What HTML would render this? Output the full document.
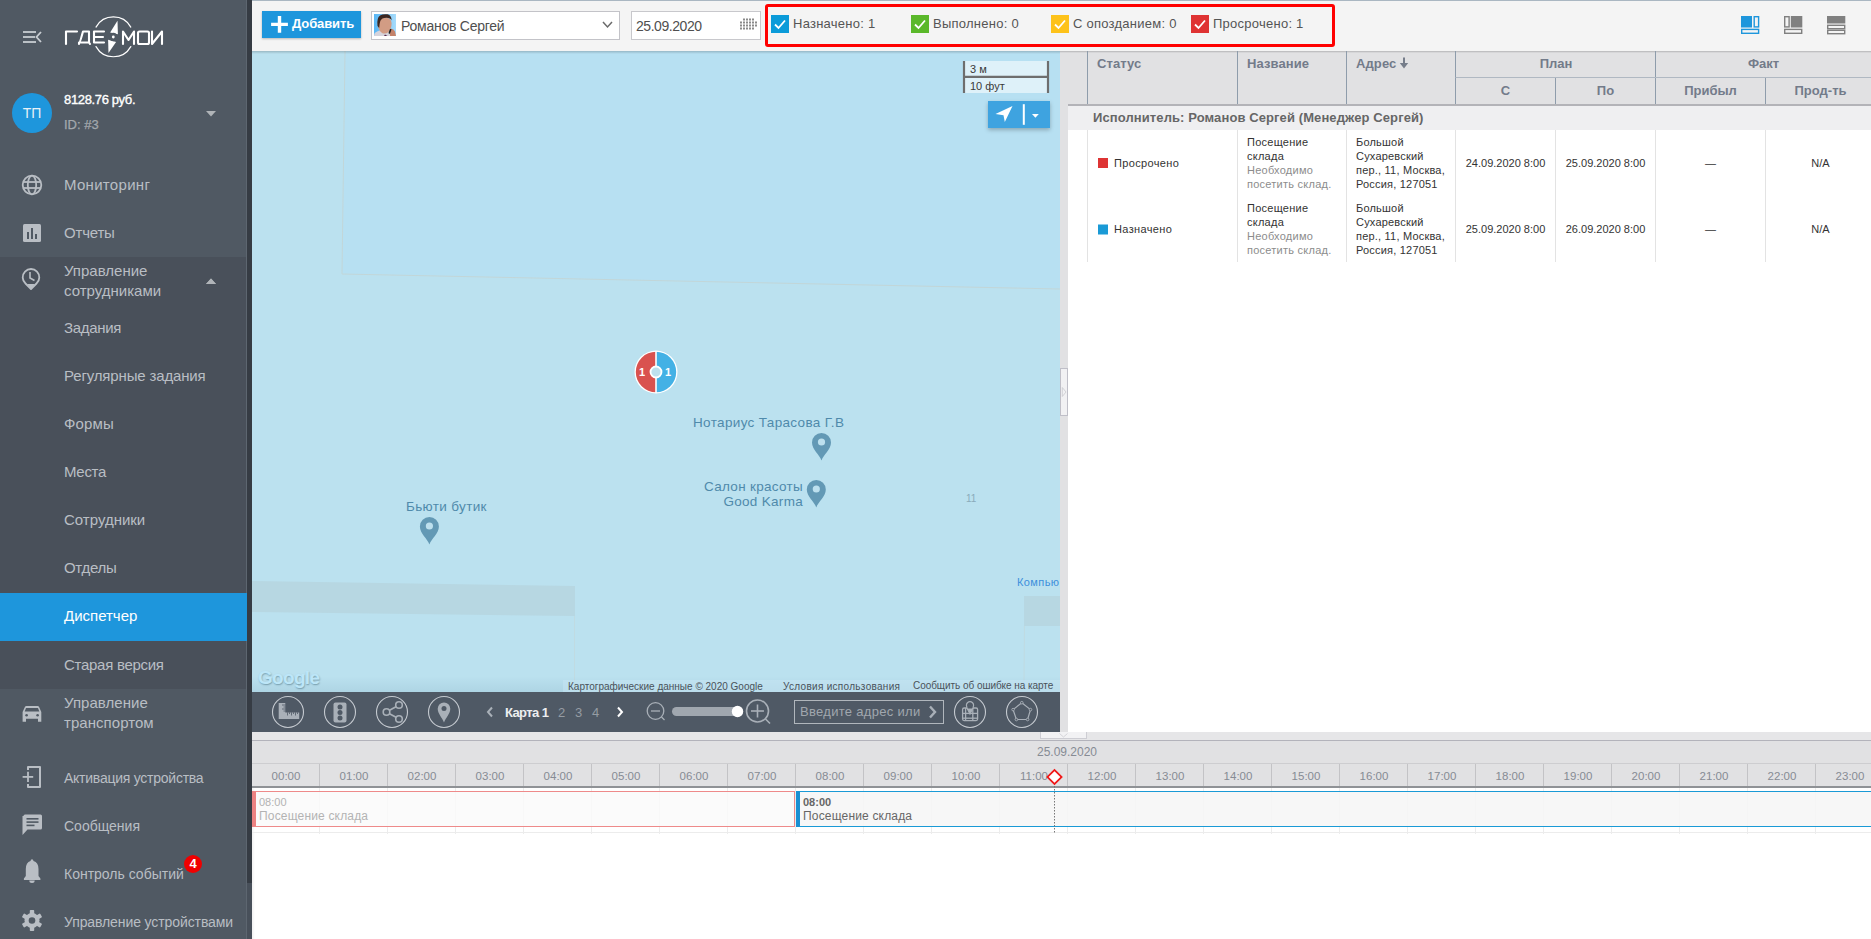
<!DOCTYPE html>
<html><head><meta charset="utf-8">
<style>
*{box-sizing:border-box;margin:0;padding:0}
html,body{width:1871px;height:939px;overflow:hidden;background:#fff;font-family:"Liberation Sans",sans-serif}
.a{position:absolute}
.t{position:absolute;white-space:nowrap}
#sb{left:0;top:0;width:247px;height:939px;background:#505963}
#sbedge{left:246px;top:0;width:1px;height:939px;background:#5d6670}
#sbdark{left:247px;top:0;width:5px;height:939px;background:#363c44}
.sec{left:0;top:257px;width:246px;height:432px;background:#49505a}
.act{left:0;top:593px;width:247px;height:48px;background:#1e96dc}
.mi{position:absolute;left:64px;color:#b9bec4;font-size:15px;white-space:nowrap;line-height:20px;letter-spacing:0.2px}
svg{position:absolute;overflow:visible}
</style></head><body>
<!-- SIDEBAR -->
<div id="sb" class="a"></div>
<div class="a sec"></div>
<div id="sbedge" class="a"></div>
<div class="a act"></div>
<div id="sbdark" class="a"></div>
<div class="a" style="left:247px;top:883px;width:5px;height:56px;background:#48505a"></div>
<div class="a" style="left:252px;top:51px;width:3px;height:888px;background:linear-gradient(90deg,rgba(0,0,0,.06),rgba(0,0,0,0))"></div>

<!-- hamburger -->
<svg style="left:0;top:0" width="250" height="140">
  <g stroke="#c8cdd2" stroke-width="1.8" fill="none">
    <line x1="23" y1="32" x2="36" y2="32"/>
    <line x1="23" y1="37" x2="35" y2="37"/>
    <line x1="23" y1="42" x2="36" y2="42"/>
    <polyline points="41,32 36.5,37 41,42"/>
  </g>
  <!-- logo -->
  <g stroke="#fff" stroke-width="2.1" fill="none" stroke-linecap="round" stroke-linejoin="round">
    <polyline points="66,44 66,31.5 77,31.5"/>
    <path d="M79,44 L79,42.5 Q80,42.5 82,35 L83,31.5 L89,31.5 L89,42.5 L79,42.5 M89,42.5 L90,44"/>
    <path d="M104,31.5 L94,31.5 L94,42.5 L104,42.5 M94,37 L103,37"/>
    <polyline points="123,44 123,31.5 128.5,40 134,31.5 134,44"/>
    <rect x="138" y="31.5" width="11" height="12.5" rx="1.5"/>
    <polyline points="152,31.5 152,44 162,31.5 162,44"/>
    <path d="M96,27.1 A20,20 0 0 1 130.8,27.1" stroke-width="1.2"/>
    <path d="M96,46.6 A20,20 0 0 0 130.8,46.6" stroke-width="1.2"/>
  </g>
  <defs><mask id="nm"><rect x="90" y="10" width="50" height="50" fill="#fff"/><circle cx="113.3" cy="37" r="4.3" fill="#000"/></mask></defs>
  <g mask="url(#nm)" fill="#fff"><path d="M117.5,20.7 L110.1,32.4 L117.9,34.2 Z"/><path d="M108.5,53 L108.1,39.7 L116.1,42 Z"/></g>
  <circle cx="113.3" cy="37" r="1.4" fill="#fff"/>
  <!-- avatar -->
  <circle cx="32" cy="113" r="20" fill="#1e96dc"/>
  <path d="M206,111 L216,111 L211,116.5 Z" fill="#b0b4b8"/>
</svg>
<div class="t" style="left:22px;top:104px;width:20px;text-align:center;color:#e8f1f7;font-size:14px;line-height:18px">ТП</div>
<div class="t" style="left:64px;top:92px;color:#fff;font-size:13px;line-height:16px;-webkit-text-stroke:0.35px #fff;letter-spacing:-0.35px">8128.76 руб.</div>
<div class="t" style="left:64px;top:117px;color:#a3a8ad;font-size:13px;line-height:16px;-webkit-text-stroke:0.25px #a3a8ad">ID: #3</div>

<!-- sidebar icons -->
<svg style="left:0;top:0" width="60" height="939">
  <g fill="none" stroke="#b9bec4" stroke-width="1.8">
    <circle cx="32" cy="185" r="9.3"/>
    <ellipse cx="32" cy="185" rx="4.2" ry="9.3"/>
    <line x1="23" y1="182" x2="41" y2="182"/>
    <line x1="23" y1="188" x2="41" y2="188"/>
  </g>
  <rect x="23" y="224" width="18" height="18" rx="1.5" fill="#b9bec4"/>
  <g fill="#505963"><rect x="27" y="232" width="2" height="7"/><rect x="31" y="228" width="2" height="11"/><rect x="35" y="234" width="2" height="5"/></g>
  <path d="M31,289 L25.5,283.5 A8.3,8.3 0 1 1 36.5,283.5 Z" fill="none" stroke="#b9bec4" stroke-width="1.8" stroke-linejoin="round"/>
  <path d="M27,284 L31,289 L35,284 Z" fill="#b9bec4"/>
  <polyline points="30,272 30,278 34.5,280.5" fill="none" stroke="#b9bec4" stroke-width="1.6"/>
  <!-- car -->
  <path d="M22.6,712 L25,706.8 Q25.4,705.9 26.4,705.9 L37.6,705.9 Q38.6,705.9 39,706.8 L41.3,712 L41.3,721.7 L38,721.7 L38,718.8 L26,718.8 L26,721.7 L22.6,721.7 Z" fill="#b9bec4"/>
  <path d="M26,708 L38,708 L39.3,711.6 L24.7,711.6 Z" fill="#505963"/>
  <circle cx="26.6" cy="715.2" r="1.3" fill="#505963"/><circle cx="37.6" cy="715.2" r="1.3" fill="#505963"/>
  <!-- activation -->
  <path d="M28,770 L28,767 L40,767 L40,787 L28,787 L28,784" fill="none" stroke="#b9bec4" stroke-width="2" stroke-linejoin="round"/>
  <line x1="22.6" y1="776.9" x2="33.2" y2="776.9" stroke="#b9bec4" stroke-width="1.8"/>
  <line x1="28" y1="771.8" x2="28" y2="782" stroke="#b9bec4" stroke-width="1.8"/>
  <!-- message -->
  <path d="M23.5,816 Q23.5,814.5 25,814.5 L40.5,814.5 Q42,814.5 42,816 L42,828 Q42,829.5 40.5,829.5 L27.5,829.5 L22.5,835 L22.5,816 Z" fill="#b9bec4"/>
  <g fill="#505963"><rect x="26.5" y="818" width="12" height="1.6"/><rect x="26.5" y="821.3" width="12" height="1.6"/><rect x="26.5" y="824.6" width="8" height="1.6"/></g>
  <!-- bell -->
  <path d="M32,859.3 Q33.3,859.3 33.5,861 Q38.5,862.5 38.5,869 L38.5,876 L40.4,878.5 L40.4,880 L23.9,880 L23.9,878.5 L25.8,876 L25.8,869 Q25.8,862.5 30.5,861 Q30.7,859.3 32,859.3 Z" fill="#b9bec4"/>
  <path d="M29.3,880.5 L34.7,880.5 Q34.7,883 32,883 Q29.3,883 29.3,880.5 Z" fill="#b9bec4"/>
  <!-- gear -->
  <g transform="translate(32,920.5)">
    <circle r="7.5" fill="#b9bec4"/>
    <g fill="#b9bec4">
      <rect x="-2.2" y="-10.5" width="4.4" height="21" rx="0.8"/>
      <rect x="-2.2" y="-10.5" width="4.4" height="21" rx="0.8" transform="rotate(60)"/>
      <rect x="-2.2" y="-10.5" width="4.4" height="21" rx="0.8" transform="rotate(120)"/>
    </g>
    <circle r="3.3" fill="#505963"/>
  </g>
  <path d="M206,284 L216,284 L211,278.5 Z" fill="#b0b4b8"/>
</svg>
<svg style="left:200px;top:270px" width="30" height="20"><path d="M6,14 L16,14 L11,8.5 Z" fill="#b0b4b8"/></svg>

<div class="mi" style="top:175px;letter-spacing:0.3px">Мониторинг</div>
<div class="mi" style="top:223px;letter-spacing:-0.2px">Отчеты</div>
<div class="mi" style="top:261px;letter-spacing:0px">Управление<br>сотрудниками</div>
<div class="mi" style="top:318px;letter-spacing:-0.3px">Задания</div>
<div class="mi" style="top:366px;letter-spacing:-0.15px">Регулярные задания</div>
<div class="mi" style="top:414px;letter-spacing:0.15px">Формы</div>
<div class="mi" style="top:462px;letter-spacing:-0.3px">Места</div>
<div class="mi" style="top:510px;letter-spacing:0px">Сотрудники</div>
<div class="mi" style="top:558px;letter-spacing:-0.3px">Отделы</div>
<div class="mi" style="top:606px;color:#fff;letter-spacing:0px">Диспетчер</div>
<div class="mi" style="top:655px;letter-spacing:-0.28px">Старая версия</div>
<div class="mi" style="top:693px;letter-spacing:0.05px">Управление<br>транспортом</div>
<div class="mi" style="top:768px;font-size:14px;letter-spacing:-0.25px">Активация устройства</div>
<div class="mi" style="top:816px;font-size:14px;letter-spacing:0px">Сообщения</div>
<div class="mi" style="top:864px;font-size:14px;letter-spacing:0px">Контроль событий</div>
<div class="mi" style="top:912px;font-size:14px;letter-spacing:-0.1px">Управление устройствами</div>
<div class="a" style="left:184px;top:855px;width:18px;height:18px;border-radius:9px;background:#f00000;color:#fff;font-size:13px;font-weight:bold;text-align:center;line-height:18px">4</div>

<!-- TOOLBAR -->
<div class="a" style="left:252px;top:0;width:1619px;height:51px;background:#f4f4f4;border-top:1px solid #aab7c2"></div>
<div class="a" style="left:262px;top:11px;width:99px;height:27px;background:#1e96dc;box-shadow:0 1px 2px rgba(0,0,0,.25)"></div>
<svg style="left:262px;top:11px" width="99" height="27"><path d="M15.8,5 h3.4 v6.7 h6.7 v3.4 h-6.7 v6.7 h-3.4 v-6.7 h-6.7 v-3.4 h6.7 Z" fill="#fff"/></svg>
<div class="t" style="left:292px;top:16px;color:#fff;font-size:13px;line-height:16px;font-weight:bold;letter-spacing:-0.1px">Добавить</div>
<div class="a" style="left:371px;top:11px;width:249px;height:29px;background:#fff;border:1px solid #c3c3c8"></div>
<svg style="left:374px;top:14px" width="22" height="22">
  <defs><linearGradient id="pbg" x1="0" x2="1"><stop offset="0" stop-color="#58b6f4"/><stop offset="1" stop-color="#a6dbfb"/></linearGradient></defs>
  <rect width="22" height="22" fill="url(#pbg)"/>
  <path d="M0,22 L0.5,19.5 Q3,16.5 8,16 L15,17 L18,22 Z" fill="#d6d4dc"/>
  <path d="M3.8,9 Q3.8,16.5 8,19 Q11,20.5 14.5,18 Q17.6,14.5 17.6,9 Q17,3.5 11,3.5 Q4.5,3.5 3.8,9 Z" fill="#d29c84"/>
  <path d="M3.5,12 Q2.5,4 6,1.5 Q9,-0.3 13.5,0.3 Q17.5,1 17.6,6.5 Q16.5,3.8 12.5,3.7 Q7.5,3.8 6.3,7 Q5.5,9.5 5.2,14 Z" fill="#3b2620"/>
  <path d="M16.5,15 Q19,14 21,17.5 L22,22 L16,22 Q15.5,18 16.5,15 Z" fill="#c5836a"/>
  <rect x="15.3" y="14.8" width="1.6" height="5" rx="0.6" fill="#222" transform="rotate(20 16 17)"/>
  <path d="M11,20.5 L13.5,22 L10,22 Z" fill="#5a2a50"/>
</svg>
<div class="t" style="left:401px;top:17px;color:#4f4f4f;font-size:14px;line-height:18px;letter-spacing:-0.25px">Романов Сергей</div>
<svg style="left:600px;top:18px" width="16" height="14"><polyline points="3,4 7.5,9 12,4" fill="none" stroke="#6a6a6a" stroke-width="1.5"/></svg>
<div class="a" style="left:631px;top:11px;width:130px;height:29px;background:#fff;border:1px solid #c8c8cc"></div>
<div class="t" style="left:636px;top:17px;color:#4f4f4f;font-size:14px;line-height:18px;letter-spacing:-0.45px">25.09.2020</div>
<svg style="left:739px;top:18px" width="18" height="13"><g fill="#8a8a8a">
<rect x="4" y="0.5" width="2" height="2"/><rect x="7" y="0.5" width="2" height="2"/><rect x="10" y="0.5" width="2" height="2"/><rect x="13" y="0.5" width="2" height="2"/>
<rect x="1" y="3.5" width="2" height="2"/><rect x="4" y="3.5" width="2" height="2"/><rect x="7" y="3.5" width="2" height="2"/><rect x="10" y="3.5" width="2" height="2"/><rect x="13" y="3.5" width="2" height="2"/><rect x="16" y="3.5" width="2" height="2"/>
<rect x="1" y="6.5" width="2" height="2"/><rect x="4" y="6.5" width="2" height="2"/><rect x="7" y="6.5" width="2" height="2"/><rect x="10" y="6.5" width="2" height="2"/><rect x="13" y="6.5" width="2" height="2"/><rect x="16" y="6.5" width="2" height="2"/>
<rect x="1" y="9.5" width="2" height="2"/><rect x="4" y="9.5" width="2" height="2"/><rect x="7" y="9.5" width="2" height="2"/><rect x="10" y="9.5" width="2" height="2"/><rect x="13" y="9.5" width="2" height="2"/>
</g></svg>
<div class="a" style="left:765px;top:4px;width:570px;height:43px;border:3px solid #ff0000;border-radius:3px"></div>
<svg style="left:771px;top:15px" width="18" height="18"><rect width="18" height="18" fill="#0b9bd9"/><polyline points="4,9.5 7.5,13 14,5.5" fill="none" stroke="#fff" stroke-width="1.8"/></svg>
<div class="t" style="left:793px;top:16px;color:#555;font-size:13px;line-height:16px;letter-spacing:0.25px">Назначено: 1</div>
<svg style="left:911px;top:15px" width="18" height="18"><rect width="18" height="18" fill="#5ab82a"/><polyline points="4,9.5 7.5,13 14,5.5" fill="none" stroke="#fff" stroke-width="1.8"/></svg>
<div class="t" style="left:933px;top:16px;color:#555;font-size:13px;line-height:16px;letter-spacing:0.25px">Выполнено: 0</div>
<svg style="left:1051px;top:15px" width="18" height="18"><rect width="18" height="18" fill="#fdc21a"/><polyline points="4,9.5 7.5,13 14,5.5" fill="none" stroke="#fff" stroke-width="1.8"/></svg>
<div class="t" style="left:1073px;top:16px;color:#555;font-size:13px;line-height:16px;letter-spacing:0.25px">С опозданием: 0</div>
<svg style="left:1191px;top:15px" width="18" height="18"><rect width="18" height="18" fill="#df3333"/><polyline points="4,9.5 7.5,13 14,5.5" fill="none" stroke="#fff" stroke-width="1.8"/></svg>
<div class="t" style="left:1213px;top:16px;color:#555;font-size:13px;line-height:16px;letter-spacing:0.25px">Просрочено: 1</div>
<svg style="left:1741px;top:16px" width="100" height="18">
  <rect x="0" y="0" width="11" height="11.5" fill="#1e96dc"/>
  <rect x="13.2" y="0.7" width="4.4" height="10.2" fill="none" stroke="#1e96dc" stroke-width="1.4"/>
  <rect x="0.7" y="13.4" width="16.9" height="3.9" fill="none" stroke="#1e96dc" stroke-width="1.4"/>
  <g transform="translate(43,0)">
    <rect x="0.7" y="0.7" width="4.4" height="10.2" fill="none" stroke="#808080" stroke-width="1.4"/>
    <rect x="6.8" y="0" width="11.5" height="11.5" fill="#808080"/>
    <rect x="0.7" y="13.4" width="17" height="3.9" fill="none" stroke="#808080" stroke-width="1.4"/>
  </g>
  <g transform="translate(86,0)">
    <rect x="0" y="0" width="18.3" height="7.5" fill="#808080"/>
    <rect x="0.7" y="9.3" width="17" height="3.4" fill="none" stroke="#808080" stroke-width="1.4"/>
    <rect x="0.7" y="14.3" width="17" height="3.4" fill="none" stroke="#808080" stroke-width="1.4"/>
  </g>
</svg>


<!-- MAP -->
<div class="a" style="left:252px;top:51px;width:808px;height:641px;background:#bbe1ef;overflow:hidden">
<svg style="left:0;top:0" width="808" height="641">
  <polygon points="93,0 808,0 808,238 90,223" fill="#b7e0f2"/>
  <polyline points="93,0 90,223 808,238" fill="none" stroke="#c2d6d8" stroke-width="1"/>
  <polygon points="0,530 323,535 323,565 0,561" fill="#b7d7e2"/>
  <line x1="322.5" y1="565" x2="322.5" y2="641" stroke="#c0dbe2" stroke-width="1"/>
  <polygon points="772,545 808,545 808,575 772,575" fill="#b7d7e2"/>
  <line x1="772.5" y1="575" x2="772" y2="630" stroke="#c0dbe2" stroke-width="1"/>
</svg>
<div class="a" style="left:0;top:0;width:808px;height:3px;background:linear-gradient(rgba(0,0,0,.18),rgba(0,0,0,0))"></div>
</div>
<!-- cluster marker -->
<svg style="left:634px;top:350px" width="44" height="44">
  <circle cx="22" cy="22" r="21.5" fill="#fff"/>
  <path d="M22,1.8 A20.2,20.2 0 0 0 22,42.2 Z" fill="#d9524f"/>
  <path d="M22,1.8 A20.2,20.2 0 0 1 22,42.2 Z" fill="#43b1e5"/>
  <line x1="22" y1="1" x2="22" y2="43" stroke="#fff" stroke-width="1.6"/>
  <circle cx="22" cy="22" r="5.5" fill="#bde0ee" stroke="#fff" stroke-width="1.8"/>
</svg>
<div class="t" style="left:639px;top:365px;color:#fff;font-size:11px;line-height:14px;font-weight:bold">1</div>
<div class="t" style="left:665px;top:365px;color:#fff;font-size:11px;line-height:14px;font-weight:bold">1</div>
<!-- place labels -->
<div class="t" style="left:693px;top:415px;color:#4f8aab;font-size:13.5px;line-height:16px;letter-spacing:0.35px">Нотариус Тарасова Г.В</div>
<div class="t" style="left:600px;top:480px;width:203px;text-align:right;color:#4f8aab;font-size:13.5px;line-height:14.5px;letter-spacing:0.3px">Салон красоты<br>Good Karma</div>
<div class="t" style="left:406px;top:499px;color:#4f8aab;font-size:13.5px;line-height:16px;letter-spacing:0.35px">Бьюти бутик</div>
<svg style="left:0;top:0" width="1060" height="700">
  <defs><path id="pin" d="M0,18 C-2,12 -9.5,7 -9.5,0 A9.5,9.5 0 1 1 9.5,0 C9.5,7 2,12 0,18 Z"/></defs>
  <g fill="#6399b5">
    <use href="#pin" x="821.5" y="442.5"/>
    <use href="#pin" x="816.3" y="489.5"/>
    <use href="#pin" x="429.4" y="526.5"/>
  </g>
  <g fill="#bde0ee">
    <circle cx="821.5" cy="442" r="3.6"/>
    <circle cx="816.3" cy="489" r="3.6"/>
    <circle cx="429.4" cy="526" r="3.6"/>
  </g>
</svg>
<div class="t" style="left:966px;top:492px;color:#8aabbb;font-size:10px;line-height:13px">11</div>
<div class="t" style="left:1017px;top:576px;color:#3d8fdc;font-size:11px;line-height:13px;width:43px;overflow:hidden;letter-spacing:0.4px">Компью</div>
<div class="a" style="left:252px;top:676px;width:808px;height:16px;background:linear-gradient(rgba(0,50,80,0),rgba(0,50,80,.07))"></div>
<div class="t" style="left:258px;top:666px;color:#bde6f8;font-size:19px;line-height:24px;font-weight:bold;letter-spacing:-0.7px;text-shadow:0.5px 1px 1.5px rgba(40,80,100,.45)">Google</div>
<!-- attribution -->
<div class="a" style="left:563px;top:680px;width:497px;height:12px;background:rgba(200,230,243,.5)"></div>
<div class="t" style="left:568px;top:681px;color:#4a525a;font-size:10px;line-height:12px;letter-spacing:0px">Картографические данные © 2020 Google</div>
<div class="t" style="left:783px;top:681px;color:#4a525a;font-size:10px;line-height:12px;letter-spacing:0.3px">Условия использования</div>
<div class="t" style="left:913px;top:680px;color:#4a525a;font-size:10px;line-height:12px;letter-spacing:-0.05px">Сообщить об ошибке на карте</div>
<!-- scale -->
<div class="a" style="left:964px;top:61px;width:85px;height:32px;background:rgba(255,255,255,.55)"></div>
<svg style="left:960px;top:58px" width="95" height="40">
  <g stroke="#6e6e6e" stroke-width="2.2" fill="none">
    <line x1="4" y1="3" x2="4" y2="35"/>
    <line x1="88" y1="3" x2="88" y2="35"/>
    <line x1="4" y1="18.8" x2="89" y2="18.8"/>
  </g>
</svg>
<div class="t" style="left:970px;top:63px;color:#3a3a3a;font-size:11px;line-height:13px">3 м</div>
<div class="t" style="left:970px;top:80px;color:#3a3a3a;font-size:11px;line-height:13px">10 фут</div>
<!-- locate button -->
<div class="a" style="left:988px;top:101px;width:62px;height:27px;background:#3ea3e0;box-shadow:0 2px 4px rgba(0,0,0,.25)"></div>
<svg style="left:988px;top:101px" width="62" height="27">
  <path d="M7.5,13 L24.5,5 L16.8,21 L15.5,14.2 Z" fill="#fff"/>
  <line x1="35.8" y1="3.2" x2="35.8" y2="23.8" stroke="#fff" stroke-width="2"/>
  <path d="M44,13 L50.8,13 L47.4,16.8 Z" fill="#fff"/>
</svg>
<!-- map toolbar -->
<div class="a" style="left:252px;top:692px;width:808px;height:40px;background:#4f5965"></div>
<svg style="left:252px;top:692px" width="808" height="40">
  <g fill="none" stroke="#c5cad0" stroke-width="1.1">
    <circle cx="36" cy="20" r="15.5"/>
    <circle cx="88" cy="20" r="15.5"/>
    <circle cx="140" cy="20" r="15.5"/>
    <circle cx="192" cy="20" r="15.5"/>
    <circle cx="718" cy="20" r="15.5"/>
    <circle cx="770" cy="20" r="15.5"/>
  </g>
  <g fill="#a9b0b8">
    <!-- ruler -->
    <path d="M26.7,10.9 L33.3,10.9 L33.3,20.5 L47.2,20.5 L47.2,27 L26.7,27 Z"/>
    <!-- traffic -->
    <rect x="81.5" y="10.5" width="13" height="20" rx="2"/>
    <!-- share -->
    <!-- pin -->
    <path d="M192,30.5 C190,25.5 185.7,21.5 185.7,16.8 A6.3,6.3 0 1 1 198.3,16.8 C198.3,21.5 194,25.5 192,30.5 Z"/>
  </g>
  <g fill="#4f5965">
    <circle cx="88" cy="15" r="2.5"/><circle cx="88" cy="20.5" r="2.5"/><circle cx="88" cy="26" r="2.5"/>
    <circle cx="192" cy="16.5" r="2.5"/>
  </g>
  <g fill="none" stroke="#a9b0b8" stroke-width="1.6">
    <circle cx="134.5" cy="20" r="3.3"/><circle cx="147" cy="13" r="3.3"/><circle cx="147" cy="27" r="3.3"/>
    <line x1="137.5" y1="18.3" x2="144" y2="14.7"/><line x1="137.5" y1="21.7" x2="144" y2="25.3"/>
  </g>
  <g stroke="#4f5965" stroke-width="0.8">
    <line x1="30" y1="13" x2="33.5" y2="13"/><line x1="31.5" y1="15" x2="33.5" y2="15"/><line x1="30" y1="17" x2="33.5" y2="17"/><line x1="31.5" y1="19" x2="33.5" y2="19"/>
    <line x1="35.5" y1="20.3" x2="35.5" y2="23.5"/><line x1="37.5" y1="20.3" x2="37.5" y2="22"/><line x1="39.5" y1="20.3" x2="39.5" y2="23.5"/><line x1="41.5" y1="20.3" x2="41.5" y2="22"/><line x1="43.5" y1="20.3" x2="43.5" y2="23.5"/><line x1="45.5" y1="20.3" x2="45.5" y2="22"/>
  </g>
  <!-- arrows -->
  <polyline points="240,15.5 236,20 240,24.5" fill="none" stroke="#a9b0b8" stroke-width="2"/>
  <polyline points="366,15.5 370,20 366,24.5" fill="none" stroke="#fff" stroke-width="2"/>
  <!-- zoom out -->
  <g fill="none" stroke="#a9b0b8" stroke-width="1.3">
    <circle cx="403.5" cy="19" r="8.3"/><line x1="399" y1="19" x2="408" y2="19"/><line x1="409.5" y1="25" x2="412.5" y2="28"/>
  </g>
  <rect x="420" y="15" width="71" height="9" rx="4.5" fill="#a0a7af"/>
  <circle cx="485.5" cy="19.5" r="5.7" fill="#fff"/>
  <g fill="none" stroke="#a9b0b8" stroke-width="1.6">
    <circle cx="505.5" cy="19" r="11"/><line x1="499" y1="19" x2="512" y2="19"/><line x1="505.5" y1="12.5" x2="505.5" y2="25.5"/><line x1="513.5" y1="27" x2="518" y2="31.5"/>
  </g>
  <rect x="542.5" y="8.5" width="149" height="23" fill="none" stroke="#b0b6bc" stroke-width="1"/>
  <polyline points="678,14.5 683,20 678,25.5" fill="none" stroke="#a9b0b8" stroke-width="2.4"/>
  <!-- map icon -->
  <g fill="none" stroke="#a9b0b8" stroke-width="1.3">
    <rect x="710.6" y="16" width="15" height="12.6" rx="1.5"/>
    <line x1="710.6" y1="21.4" x2="725.6" y2="21.4"/><line x1="710.6" y1="26.2" x2="725.6" y2="26.2"/>
    <line x1="713.6" y1="16" x2="713.6" y2="28.6"/><line x1="720.8" y1="16" x2="720.8" y2="28.6"/>
  </g>
  <path d="M718,22 C716.8,19 714.4,16.5 714.4,13.3 A3.6,3.6 0 1 1 721.6,13.3 C721.6,16.5 719.2,19 718,22 Z" fill="#4f5965" stroke="#a9b0b8" stroke-width="1.2"/>
  <path d="M718,22 L715,16.5 L721,16.5 Z" fill="#a9b0b8"/>
  <!-- pentagon -->
  <polygon points="769.8,10.7 778.5,17.6 775.6,27.5 764.4,27.5 761.1,17.6" fill="none" stroke="#a9b0b8" stroke-width="1.2"/>
  <g fill="#4f5965" stroke="#a9b0b8" stroke-width="0.9"><circle cx="769.8" cy="10.7" r="1.3"/><circle cx="778.5" cy="17.6" r="1.3"/><circle cx="775.6" cy="27.5" r="1.3"/><circle cx="764.4" cy="27.5" r="1.3"/><circle cx="761.1" cy="17.6" r="1.3"/></g>
</svg>
<div class="t" style="left:505px;top:705px;color:#eceef0;font-size:13px;line-height:16px;font-weight:bold;letter-spacing:-0.6px">Карта 1</div>
<div class="t" style="left:558px;top:705px;color:#959ca3;font-size:13px;line-height:16px">2</div>
<div class="t" style="left:575px;top:705px;color:#959ca3;font-size:13px;line-height:16px">3</div>
<div class="t" style="left:592px;top:705px;color:#959ca3;font-size:13px;line-height:16px">4</div>
<div class="t" style="left:800px;top:704px;color:#a0a7ae;font-size:13px;line-height:16px;letter-spacing:0.3px">Введите адрес или</div>


<!-- TABLE -->
<div class="a" style="left:1060px;top:51px;width:811px;height:55px;background:#e1e1e3"></div>
<div class="a" style="left:1060px;top:51px;width:8px;height:681px;background:#e1e1e3"></div>
<div class="a" style="left:1060px;top:51px;width:811px;height:2px;background:linear-gradient(rgba(0,0,0,.2),rgba(0,0,0,0))"></div>
<div class="a" style="left:1060px;top:368px;width:8px;height:48px;background:#f1f1f3;border:1px solid #bfbfc8"></div>
<svg style="left:1060px;top:368px" width="8" height="48"><polygon points="2.3,19.5 6,24 2.3,28.5" fill="none" stroke="#c9c9ce" stroke-width="0.8"/></svg>
<div class="a" style="left:1068px;top:104px;width:803px;height:2px;background:#b3b3b8"></div>
<svg style="left:1060px;top:51px" width="811" height="55">
  <g stroke="#8e9cab" stroke-width="1">
    <line x1="27.5" y1="0" x2="27.5" y2="53"/>
    <line x1="177.5" y1="0" x2="177.5" y2="53"/>
    <line x1="286.5" y1="0" x2="286.5" y2="53"/>
    <line x1="395.5" y1="0" x2="395.5" y2="53"/>
    <line x1="595.5" y1="0" x2="595.5" y2="53"/>
    <line x1="495.5" y1="27" x2="495.5" y2="53"/>
    <line x1="705.5" y1="27" x2="705.5" y2="53"/>
  </g>
  <line x1="395.5" y1="26.5" x2="811" y2="26.5" stroke="#b0b8c2" stroke-width="1"/>
  <g fill="#767d8a"><rect x="343" y="6.5" width="2" height="8"/><path d="M339.8,12 L348.2,12 L344,17.5 Z"/></g>
</svg>
<div class="t" style="left:1097px;top:56px;color:#737b8a;font-size:13px;line-height:15px;font-weight:bold;letter-spacing:0.1px">Статус</div>
<div class="t" style="left:1247px;top:56px;color:#737b8a;font-size:13px;line-height:15px;font-weight:bold;letter-spacing:0.1px">Название</div>
<div class="t" style="left:1356px;top:56px;color:#737b8a;font-size:13px;line-height:15px;font-weight:bold;letter-spacing:0.1px">Адрес</div>
<div class="t" style="left:1456px;top:56px;width:200px;text-align:center;color:#737b8a;font-size:13px;line-height:15px;font-weight:bold">План</div>
<div class="t" style="left:1656px;top:56px;width:215px;text-align:center;color:#737b8a;font-size:13px;line-height:15px;font-weight:bold">Факт</div>
<div class="t" style="left:1456px;top:83px;width:99px;text-align:center;color:#737b8a;font-size:13px;line-height:15px;font-weight:bold">С</div>
<div class="t" style="left:1556px;top:83px;width:99px;text-align:center;color:#737b8a;font-size:13px;line-height:15px;font-weight:bold">По</div>
<div class="t" style="left:1656px;top:83px;width:109px;text-align:center;color:#737b8a;font-size:13px;line-height:15px;font-weight:bold">Прибыл</div>
<div class="t" style="left:1766px;top:83px;width:109px;text-align:center;color:#737b8a;font-size:13px;line-height:15px;font-weight:bold">Прод-ть</div>
<div class="a" style="left:1068px;top:106px;width:803px;height:24px;background:#efeff1"></div>
<div class="t" style="left:1093px;top:110px;color:#666;font-size:13px;line-height:15px;font-weight:bold;letter-spacing:0.1px">Исполнитель: Романов Сергей (Менеджер Сергей)</div>
<svg style="left:1060px;top:130px" width="811" height="133">
  <g stroke="#e3e3e3" stroke-width="1">
    <line x1="27.5" y1="0" x2="27.5" y2="132"/>
    <line x1="177.5" y1="0" x2="177.5" y2="132"/>
    <line x1="286.5" y1="0" x2="286.5" y2="132"/>
    <line x1="395.5" y1="0" x2="395.5" y2="132"/>
    <line x1="495.5" y1="0" x2="495.5" y2="132"/>
    <line x1="595.5" y1="0" x2="595.5" y2="132"/>
    <line x1="705.5" y1="0" x2="705.5" y2="132"/>
  </g>
  <rect x="38" y="28" width="10" height="10" fill="#de3434"/>
  <rect x="38" y="94.5" width="10" height="10" fill="#1a9ad6"/>
</svg>
<div class="t" style="left:1114px;top:156px;color:#333;font-size:11px;line-height:14px;letter-spacing:0.35px">Просрочено</div>
<div class="t" style="left:1114px;top:222px;color:#333;font-size:11px;line-height:14px;letter-spacing:0.35px">Назначено</div>
<div class="t" style="left:1247px;top:135px;color:#333;font-size:11px;line-height:14px;letter-spacing:0.25px">Посещение<br>склада<br><span style="color:#8c8c8c">Необходимо<br>посетить склад.</span></div>
<div class="t" style="left:1247px;top:201px;color:#333;font-size:11px;line-height:14px;letter-spacing:0.25px">Посещение<br>склада<br><span style="color:#8c8c8c">Необходимо<br>посетить склад.</span></div>
<div class="t" style="left:1356px;top:135px;color:#333;font-size:11px;line-height:14px;letter-spacing:0.2px">Большой<br>Сухаревский<br>пер., 11, Москва,<br>Россия, 127051</div>
<div class="t" style="left:1356px;top:201px;color:#333;font-size:11px;line-height:14px;letter-spacing:0.2px">Большой<br>Сухаревский<br>пер., 11, Москва,<br>Россия, 127051</div>
<div class="t" style="left:1456px;top:156px;width:99px;text-align:center;color:#333;font-size:11px;line-height:14px">24.09.2020 8:00</div>
<div class="t" style="left:1556px;top:156px;width:99px;text-align:center;color:#333;font-size:11px;line-height:14px">25.09.2020 8:00</div>
<div class="t" style="left:1456px;top:222px;width:99px;text-align:center;color:#333;font-size:11px;line-height:14px">25.09.2020 8:00</div>
<div class="t" style="left:1556px;top:222px;width:99px;text-align:center;color:#333;font-size:11px;line-height:14px">26.09.2020 8:00</div>
<div class="t" style="left:1656px;top:156px;width:109px;text-align:center;color:#333;font-size:11px;line-height:14px">—</div>
<div class="t" style="left:1656px;top:222px;width:109px;text-align:center;color:#333;font-size:11px;line-height:14px">—</div>
<div class="t" style="left:1766px;top:156px;width:109px;text-align:center;color:#333;font-size:11px;line-height:14px">N/A</div>
<div class="t" style="left:1766px;top:222px;width:109px;text-align:center;color:#333;font-size:11px;line-height:14px">N/A</div>


<!-- TIMELINE -->
<div class="a" style="left:252px;top:732px;width:1619px;height:8px;background:#e6e6e8"></div>
<div class="a" style="left:252px;top:740px;width:1619px;height:1px;background:#b3b3bb"></div>
<div class="a" style="left:1040px;top:732px;width:47px;height:7px;background:#f2f2f4;border:1px solid #cdcdd3;border-top:none"></div>
<svg style="left:1040px;top:732px" width="47" height="8"><polyline points="19.5,1.5 23.5,5 27.5,1.5" fill="none" stroke="#d0d0d5" stroke-width="0.9"/></svg>
<div class="a" style="left:252px;top:741px;width:1619px;height:45px;background:#e1e1e3"></div>
<svg style="left:252px;top:740px" width="1619" height="47"><g stroke="#c3c3c6" stroke-width="1"><line x1="67.5" y1="23" x2="67.5" y2="46"/><line x1="135.5" y1="23" x2="135.5" y2="46"/><line x1="203.5" y1="23" x2="203.5" y2="46"/><line x1="271.5" y1="23" x2="271.5" y2="46"/><line x1="339.5" y1="23" x2="339.5" y2="46"/><line x1="407.5" y1="23" x2="407.5" y2="46"/><line x1="475.5" y1="23" x2="475.5" y2="46"/><line x1="543.5" y1="23" x2="543.5" y2="46"/><line x1="611.5" y1="23" x2="611.5" y2="46"/><line x1="679.5" y1="23" x2="679.5" y2="46"/><line x1="747.5" y1="23" x2="747.5" y2="46"/><line x1="815.5" y1="23" x2="815.5" y2="46"/><line x1="883.5" y1="23" x2="883.5" y2="46"/><line x1="951.5" y1="23" x2="951.5" y2="46"/><line x1="1019.5" y1="23" x2="1019.5" y2="46"/><line x1="1087.5" y1="23" x2="1087.5" y2="46"/><line x1="1155.5" y1="23" x2="1155.5" y2="46"/><line x1="1223.5" y1="23" x2="1223.5" y2="46"/><line x1="1291.5" y1="23" x2="1291.5" y2="46"/><line x1="1359.5" y1="23" x2="1359.5" y2="46"/><line x1="1427.5" y1="23" x2="1427.5" y2="46"/><line x1="1495.5" y1="23" x2="1495.5" y2="46"/><line x1="1563.5" y1="23" x2="1563.5" y2="46"/><line x1="1631.5" y1="23" x2="1631.5" y2="46"/></g><line x1="0" y1="23.5" x2="1619" y2="23.5" stroke="#cdcdd0" stroke-width="1"/></svg>
<div class="a" style="left:252px;top:786px;width:1619px;height:2px;background:#8f9296"></div>
<div class="t" style="left:1017px;top:745px;width:100px;text-align:center;color:#868b94;font-size:12px;line-height:14px">25.09.2020</div>
<div class="t" style="left:252px;top:769px;width:68px;text-align:center;color:#868b94;font-size:11.5px;line-height:14px">00:00</div>
<div class="t" style="left:320px;top:769px;width:68px;text-align:center;color:#868b94;font-size:11.5px;line-height:14px">01:00</div>
<div class="t" style="left:388px;top:769px;width:68px;text-align:center;color:#868b94;font-size:11.5px;line-height:14px">02:00</div>
<div class="t" style="left:456px;top:769px;width:68px;text-align:center;color:#868b94;font-size:11.5px;line-height:14px">03:00</div>
<div class="t" style="left:524px;top:769px;width:68px;text-align:center;color:#868b94;font-size:11.5px;line-height:14px">04:00</div>
<div class="t" style="left:592px;top:769px;width:68px;text-align:center;color:#868b94;font-size:11.5px;line-height:14px">05:00</div>
<div class="t" style="left:660px;top:769px;width:68px;text-align:center;color:#868b94;font-size:11.5px;line-height:14px">06:00</div>
<div class="t" style="left:728px;top:769px;width:68px;text-align:center;color:#868b94;font-size:11.5px;line-height:14px">07:00</div>
<div class="t" style="left:796px;top:769px;width:68px;text-align:center;color:#868b94;font-size:11.5px;line-height:14px">08:00</div>
<div class="t" style="left:864px;top:769px;width:68px;text-align:center;color:#868b94;font-size:11.5px;line-height:14px">09:00</div>
<div class="t" style="left:932px;top:769px;width:68px;text-align:center;color:#868b94;font-size:11.5px;line-height:14px">10:00</div>
<div class="t" style="left:1000px;top:769px;width:68px;text-align:center;color:#868b94;font-size:11.5px;line-height:14px">11:00</div>
<div class="t" style="left:1068px;top:769px;width:68px;text-align:center;color:#868b94;font-size:11.5px;line-height:14px">12:00</div>
<div class="t" style="left:1136px;top:769px;width:68px;text-align:center;color:#868b94;font-size:11.5px;line-height:14px">13:00</div>
<div class="t" style="left:1204px;top:769px;width:68px;text-align:center;color:#868b94;font-size:11.5px;line-height:14px">14:00</div>
<div class="t" style="left:1272px;top:769px;width:68px;text-align:center;color:#868b94;font-size:11.5px;line-height:14px">15:00</div>
<div class="t" style="left:1340px;top:769px;width:68px;text-align:center;color:#868b94;font-size:11.5px;line-height:14px">16:00</div>
<div class="t" style="left:1408px;top:769px;width:68px;text-align:center;color:#868b94;font-size:11.5px;line-height:14px">17:00</div>
<div class="t" style="left:1476px;top:769px;width:68px;text-align:center;color:#868b94;font-size:11.5px;line-height:14px">18:00</div>
<div class="t" style="left:1544px;top:769px;width:68px;text-align:center;color:#868b94;font-size:11.5px;line-height:14px">19:00</div>
<div class="t" style="left:1612px;top:769px;width:68px;text-align:center;color:#868b94;font-size:11.5px;line-height:14px">20:00</div>
<div class="t" style="left:1680px;top:769px;width:68px;text-align:center;color:#868b94;font-size:11.5px;line-height:14px">21:00</div>
<div class="t" style="left:1748px;top:769px;width:68px;text-align:center;color:#868b94;font-size:11.5px;line-height:14px">22:00</div>
<div class="t" style="left:1816px;top:769px;width:68px;text-align:center;color:#868b94;font-size:11.5px;line-height:14px">23:00</div>

<svg style="left:252px;top:788px" width="1619" height="46"><g stroke="#ececec" stroke-width="1"><line x1="67.5" y1="0" x2="67.5" y2="46"/><line x1="135.5" y1="0" x2="135.5" y2="46"/><line x1="203.5" y1="0" x2="203.5" y2="46"/><line x1="271.5" y1="0" x2="271.5" y2="46"/><line x1="339.5" y1="0" x2="339.5" y2="46"/><line x1="407.5" y1="0" x2="407.5" y2="46"/><line x1="475.5" y1="0" x2="475.5" y2="46"/><line x1="543.5" y1="0" x2="543.5" y2="46"/><line x1="611.5" y1="0" x2="611.5" y2="46"/><line x1="679.5" y1="0" x2="679.5" y2="46"/><line x1="747.5" y1="0" x2="747.5" y2="46"/><line x1="815.5" y1="0" x2="815.5" y2="46"/><line x1="883.5" y1="0" x2="883.5" y2="46"/><line x1="951.5" y1="0" x2="951.5" y2="46"/><line x1="1019.5" y1="0" x2="1019.5" y2="46"/><line x1="1087.5" y1="0" x2="1087.5" y2="46"/><line x1="1155.5" y1="0" x2="1155.5" y2="46"/><line x1="1223.5" y1="0" x2="1223.5" y2="46"/><line x1="1291.5" y1="0" x2="1291.5" y2="46"/><line x1="1359.5" y1="0" x2="1359.5" y2="46"/><line x1="1427.5" y1="0" x2="1427.5" y2="46"/><line x1="1495.5" y1="0" x2="1495.5" y2="46"/><line x1="1563.5" y1="0" x2="1563.5" y2="46"/><line x1="1631.5" y1="0" x2="1631.5" y2="46"/></g><line x1="0" y1="44.5" x2="1619" y2="44.5" stroke="#ececec" stroke-width="1"/></svg>
<div class="a" style="left:252px;top:791px;width:543px;height:36px;background:rgba(250,250,250,.85);border:1px solid #ee8a8a;border-left:4px solid #ec8282"></div>
<div class="t" style="left:259px;top:795px;color:#b3b3b3;font-size:11px;line-height:14px">08:00</div>
<div class="t" style="left:259px;top:809px;color:#b3b3b3;font-size:12px;line-height:14px;letter-spacing:0.17px">Посещение склада</div>
<div class="a" style="left:796px;top:791px;width:1080px;height:36px;background:rgba(246,246,246,.9);border:1.5px solid #1a9ad6;border-left:4px solid #1a8fd2"></div>
<div class="t" style="left:803px;top:795px;color:#666;font-size:11px;line-height:14px;font-weight:bold">08:00</div>
<div class="t" style="left:803px;top:809px;color:#666;font-size:12px;line-height:14px;letter-spacing:0.17px">Посещение склада</div>
<svg style="left:1040px;top:765px" width="30" height="70">
  <line x1="14.5" y1="12" x2="14.5" y2="68" stroke="#777" stroke-width="1" stroke-dasharray="1.5,1.5"/>
  <rect x="9.5" y="7" width="10" height="10" transform="rotate(45 14.5 12)" fill="#fff" stroke="#f01818" stroke-width="1.8"/>
</svg>

</body></html>
